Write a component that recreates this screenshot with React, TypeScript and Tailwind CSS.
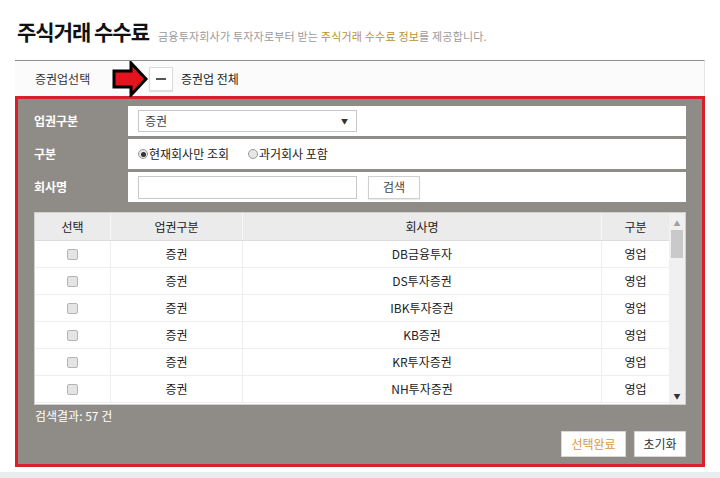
import React from 'react';

const font = { fontFamily: '"Noto Sans CJK KR", "Noto Sans", sans-serif' };

type Row = { id: string; sector: string; name: string; kind: string };

const rows: Row[] = [
  { id: 'db', sector: '증권', name: 'DB금융투자', kind: '영업' },
  { id: 'ds', sector: '증권', name: 'DS투자증권', kind: '영업' },
  { id: 'ibk', sector: '증권', name: 'IBK투자증권', kind: '영업' },
  { id: 'kb', sector: '증권', name: 'KB증권', kind: '영업' },
  { id: 'kr', sector: '증권', name: 'KR투자증권', kind: '영업' },
  { id: 'nh', sector: '증권', name: 'NH투자증권', kind: '영업' },
];

function Arrow() {
  return (
    <svg width="38" height="36" viewBox="0 0 38 36" className="shrink-0">
      <polygon
        points="3,10 20,10 20,2 35,18 20,34 20,26 3,26"
        fill="#e3141d"
        stroke="#000"
        strokeWidth="3"
        strokeLinejoin="miter"
      />
    </svg>
  );
}

function FormRow({ label, gap, children }: { label: string; gap?: string; children: React.ReactNode }) {
  return (
    <div className="flex h-[30px]">
      <div className="w-[94px] flex items-center text-[12px] font-bold text-white">{label}</div>
      <div className={`flex-1 bg-white flex items-center pl-[10px] ${gap ?? 'gap-[11px]'}`}>{children}</div>
    </div>
  );
}

function Radio({ checked, label }: { checked?: boolean; label: string }) {
  return (
    <label className="flex items-center text-[12px] text-[#222]">
      <span className="w-[10px] h-[10px] rounded-full border border-[#9a9a9a] bg-[#e6e6e6] flex items-center justify-center mr-[1px]">
        {checked && <span className="w-[5px] h-[5px] rounded-full bg-[#333]" />}
      </span>
      {label}
    </label>
  );
}

function Checkbox() {
  return <span className="inline-block w-[11px] h-[11px] rounded-[2px] border border-[#b4b4b4] bg-[#e4e4e4]" />;
}

export default function App() {
  return (
    <div className="w-[720px] h-[478px] bg-[#e8eef0] overflow-hidden" style={font}>
      <div className="w-[720px] h-[472px] bg-white">
        {/* Title */}
        <div className="h-[60px] flex items-end pl-[17px] pb-[18px]">
          <h1 className="text-[21px] font-bold text-[#111] leading-none tracking-[-1px]">주식거래 수수료</h1>
          <p className="ml-[9px] text-[11px] text-[#9a9a9a] leading-none tracking-[0.2px]">
            금융투자회사가 투자자로부터 받는 <span className="text-[#b8912e]">주식거래 수수료 정보</span>를 제공합니다.
          </p>
        </div>

        {/* Section picker */}
        <div className="ml-[15px] w-[690px] h-[36px] border-t border-[#8e8e8e] border-r border-r-[#e6e6e6] bg-[#fbfbfb] flex items-center">
          <span className="ml-[20px] w-[76px] text-[12px] text-[#333]">증권업선택</span>
          <Arrow />
          <button className="w-[24px] h-[24px] bg-white border border-[#dcdcdc] shadow-[0_1px_1px_rgba(0,0,0,0.1)] flex items-center justify-center">
            <span className="block w-[10px] h-[2px] bg-[#555]" />
          </button>
          <span className="ml-[8px] text-[12px] text-[#222]">증권업 전체</span>
        </div>

        {/* Filter panel */}
        <div className="ml-[15px] w-[690px] h-[371px] border-[3px] border-[#d81f2a] bg-[#8f8b86] px-[16px] pt-[7px] pb-[7px] flex flex-col">
          <div className="flex flex-col gap-[3px]">
            <FormRow label="업권구분">
              <div className="w-[219px] h-[22px] border border-[#c8c8c8] flex items-center justify-between pl-[6px] pr-[8px] text-[12px] text-[#444]">
                <span>증권</span>
                <span className="text-[7px] text-[#333]">▼</span>
              </div>
            </FormRow>
            <FormRow label="구분" gap="gap-[19px]">
              <Radio checked label="현재회사만 조회" />
              <Radio label="과거회사 포함" />
            </FormRow>
            <FormRow label="회사명">
              <div className="w-[219px] h-[23px] border border-[#c8c8c8]" />
              <button className="w-[52px] h-[23px] border border-[#cfcfcf] shadow-[0_1px_1px_rgba(0,0,0,0.08)] text-[12px] text-[#444]">
                검색
              </button>
            </FormRow>
          </div>

          {/* Table */}
          <div className="mt-[10px] h-[193px] bg-white flex border border-[#d0d0d0]">
            <div className="flex-1 flex flex-col">
              <div className="h-[28px] bg-[#ebebeb] flex text-[12px] text-[#222] border-b border-[#dcdcdc]">
                <div className="w-[76px] flex items-center justify-center border-r border-[#f6f6f6]">선택</div>
                <div className="w-[132px] flex items-center justify-center border-r border-[#f6f6f6]">업권구분</div>
                <div className="w-[359px] flex items-center justify-center border-r border-[#f6f6f6]">회사명</div>
                <div className="flex-1 flex items-center justify-center">구분</div>
              </div>
              {rows.map((r) => (
                <div key={r.id} className="h-[27px] flex text-[12px] text-[#222] border-b border-[#eeeeee]">
                  <div className="w-[76px] flex items-center justify-center border-r border-[#eeeeee]">
                    <Checkbox />
                  </div>
                  <div className="w-[132px] flex items-center justify-center border-r border-[#eeeeee]">{r.sector}</div>
                  <div className="w-[359px] flex items-center justify-center border-r border-[#eeeeee]">{r.name}</div>
                  <div className="flex-1 flex items-center justify-center">{r.kind}</div>
                </div>
              ))}
            </div>
            {/* Scrollbar */}
            <div className="w-[16px] bg-[#f0f0f0] flex flex-col items-center">
              <span className="h-[14px] mt-[3px] text-[7px] text-[#a0a0a0] leading-[14px]">▲</span>
              <span className="w-[12px] h-[28px] bg-[#c9c9c9]" />
              <span className="flex-1" />
              <span className="h-[14px] mb-[1px] text-[7px] text-[#333] leading-[14px]">▼</span>
            </div>
          </div>

          <div className="mt-[3px] h-[16px] flex items-center pl-[1px] text-[12px] text-white">검색결과: 57 건</div>

          <div className="mt-[7px] flex justify-end gap-[8px]">
            <button className="w-[65px] h-[26px] bg-white border border-[#d8d8d8] text-[12px] text-[#d69a3a]">선택완료</button>
            <button className="w-[52px] h-[26px] bg-white border border-[#d8d8d8] text-[12px] text-[#333]">초기화</button>
          </div>
        </div>
      </div>
    </div>
  );
}
